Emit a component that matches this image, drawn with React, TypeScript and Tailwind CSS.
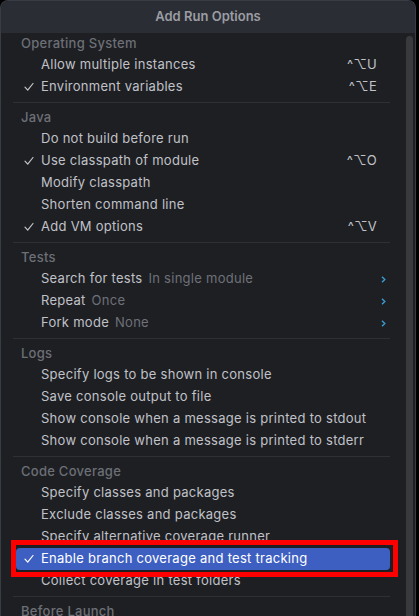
import React from "react";

type Item = {
  label: string;
  checked?: boolean;
  hint?: string;
  shortcut?: string;
  submenu?: boolean;
  selected?: boolean;
};

type Section = { title: string; items: Item[] };

const SECTIONS: Section[] = [
  {
    title: "Operating System",
    items: [
      { label: "Allow multiple instances", shortcut: "^⌥U" },
      { label: "Environment variables", checked: true, shortcut: "^⌥E" },
    ],
  },
  {
    title: "Java",
    items: [
      { label: "Do not build before run" },
      { label: "Use classpath of module", checked: true, shortcut: "^⌥O" },
      { label: "Modify classpath" },
      { label: "Shorten command line" },
      { label: "Add VM options", checked: true, shortcut: "^⌥V" },
    ],
  },
  {
    title: "Tests",
    items: [
      { label: "Search for tests", hint: "In single module", submenu: true },
      { label: "Repeat", hint: "Once", submenu: true },
      { label: "Fork mode", hint: "None", submenu: true },
    ],
  },
  {
    title: "Logs",
    items: [
      { label: "Specify logs to be shown in console" },
      { label: "Save console output to file" },
      { label: "Show console when a message is printed to stdout" },
      { label: "Show console when a message is printed to stderr" },
    ],
  },
  {
    title: "Code Coverage",
    items: [
      { label: "Specify classes and packages" },
      { label: "Exclude classes and packages" },
      { label: "Specify alternative coverage runner" },
      { label: "Enable branch coverage and test tracking", checked: true, selected: true },
      { label: "Collect coverage in test folders" },
    ],
  },
  { title: "Before Launch", items: [] },
];

const Check = ({ light }: { light?: boolean }) => (
  <svg width="10" height="10" viewBox="0 0 10 10" className="shrink-0">
    <path
      d="M1 5.2 L3.7 8.2 L9 1.5"
      fill="none"
      stroke={light ? "#ffffff" : "#c4c6cc"}
      strokeWidth="1.2"
      strokeLinecap="round"
      strokeLinejoin="round"
    />
  </svg>
);

const Chevron = () => (
  <svg width="5" height="7" viewBox="0 0 5 7">
    <path d="M1 0.8 L3.8 3.5 L1 6.2" fill="none" stroke="#3a9bd1" strokeWidth="1.4" />
  </svg>
);

const Row = ({ item }: { item: Item }) => {
  const base = item.selected ? "bg-[#3e5fc2] text-white rounded-[4px]" : "text-[#c0c2c8]";
  return (
    <div className={`h-[22px] ml-[15px] mr-[16px] pl-[8px] pr-[4px] flex items-center ${base}`}>
      <div className="w-[17px] shrink-0 flex items-center">{item.checked && <Check light={item.selected} />}</div>
      <span className="whitespace-nowrap">{item.label}</span>
      {item.hint && <span className="ml-[6px] text-[#6e7178] whitespace-nowrap">{item.hint}</span>}
      <div className="flex-1" />
      {item.shortcut && <span className="mr-[9px] text-[#c0c2c8] tracking-[0.3px]">{item.shortcut}</span>}
      {item.submenu && <Chevron />}
    </div>
  );
};

export default function App() {
  return (
    <div
      className="w-[419px] h-[616px] bg-black overflow-hidden relative text-[13px] tracking-[0.27px]"
      style={{ fontFamily: "Inter, 'DejaVu Sans', sans-serif" }}
    >
      <div className="w-[416px] h-[640px] rounded-t-[8px] border-x border-t border-[#393c44] bg-[#1e1f23] flex flex-col overflow-hidden">
        <div className="h-[32px] shrink-0 bg-[#2b2d35] flex items-center justify-center font-semibold text-[#9b9da4] tracking-normal">
          Add Run Options
        </div>
        <div className="flex flex-1">
          <div className="flex-1">
            {SECTIONS.map((s, i) => (
              <div key={s.title}>
                {i > 0 && <div className="mt-[4px] mb-[4px] ml-[12px] mr-[16px] h-px bg-[#2e3035]" />}
                <div className="h-[21px] pl-[20px] flex items-center text-[#6c6f76] font-medium">{s.title}</div>
                {s.items.map((it) => (
                  <Row key={it.label} item={it} />
                ))}
              </div>
            ))}
          </div>
          <div className="w-[9px] shrink-0 pt-[3px] pr-[2px]">
            <div className="w-[7px] h-full rounded-t-full bg-[#393a3e]" />
          </div>
        </div>
      </div>
      <div className="absolute left-[11px] top-[540px] w-[387px] h-[37px] border-[5px] border-[#ff0000]" />
    </div>
  );
}
